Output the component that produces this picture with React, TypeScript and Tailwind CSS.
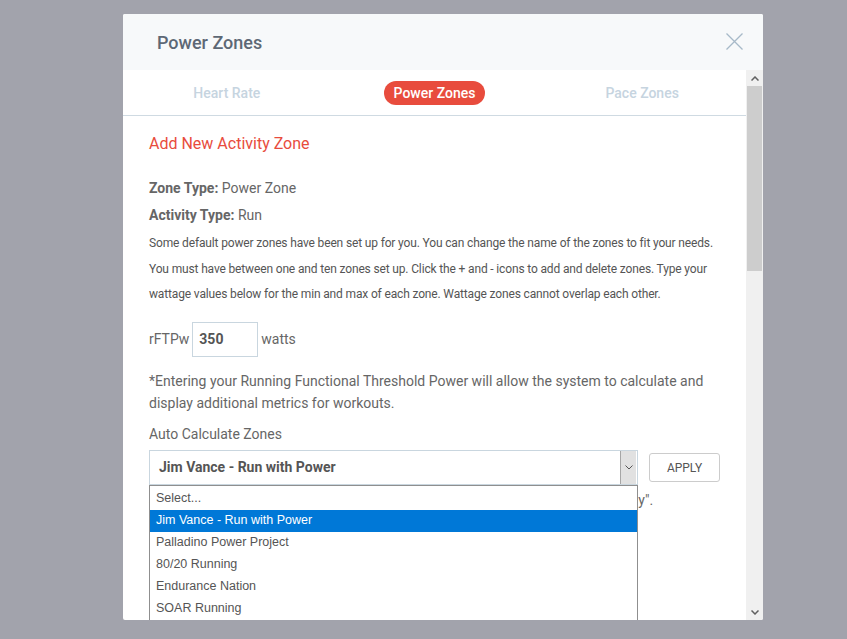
// Power Zones modal: tabs, rFTPw input and the auto-calculate select with its open list.

const OPTIONS = [
  "Select...",
  "Jim Vance - Run with Power",
  "Palladino Power Project",
  "80/20 Running",
  "Endurance Nation",
  "SOAR Running",
];

export default function App() {
  return (
    <div className="min-h-[639px] w-[847px] bg-[#a2a3ac] pl-[123px] pt-[14px] font-['Roboto',sans-serif]">
      <div className="flex h-[606px] w-[640px] flex-col overflow-hidden rounded-[2px] bg-white">
        {/* header */}
        <div className="flex h-[56px] shrink-0 items-center justify-between bg-[#f7f9fa] pl-[34px] pr-[20px]">
          <h1 className="text-[18px] font-medium text-[#5d6875]">Power Zones</h1>
          <svg width="17" height="17" viewBox="0 0 17 17" className="mt-[-1px]">
            <path d="M0.5 0.5 L16.5 16.5 M16.5 0.5 L0.5 16.5" stroke="#a7b9c8" strokeWidth="1.3" />
          </svg>
        </div>

        <div className="flex min-h-0 flex-1">
          <div className="relative min-w-0 flex-1 overflow-hidden">
            <Tabs />
            <div className="px-[26px] pt-[18px] text-[#666]">
              <h2 className="text-[16px] leading-[20px] text-[#e84c3d]">Add New Activity Zone</h2>

              <p className="mt-[24px] text-[14px] leading-[20px]">
                <span className="font-bold">Zone Type:</span> Power Zone
              </p>
              <p className="mt-[7px] text-[14px] leading-[20px]">
                <span className="font-bold">Activity Type:</span> Run
              </p>
              <p className="mt-[6px] text-[12px] leading-[25.5px] tracking-[-0.15px] text-[#555]">
                Some default power zones have been set up for you. You can change the name of the zones to fit your needs.
                You must have between one and ten zones set up. Click the + and - icons to add and delete zones. Type your
                wattage values below for the min and max of each zone. Wattage zones cannot overlap each other.
              </p>

              <div className="mt-[14px] flex items-center text-[14px]">
                <span>rFTPw</span>
                <div className="ml-[3px] flex h-[35px] w-[66px] items-center border border-[#c9d6df] pl-[6px] font-bold text-[#555]">
                  350
                </div>
                <span className="ml-[3px]">watts</span>
              </div>

              <p className="mt-[13px] text-[14px] leading-[22px]">
                *Entering your Running Functional Threshold Power will allow the system to calculate and display additional
                metrics for workouts.
              </p>

              <p className="mt-[10px] text-[14px] leading-[20px]">Auto Calculate Zones</p>

              <div className="relative mt-[6px]">
                <div className="flex items-center">
                  <div className="flex h-[35px] w-[489px] items-center border border-[#c9d6df] bg-white">
                    <span className="flex-1 pl-[9px] text-[14px] font-bold text-[#555]">Jim Vance - Run with Power</span>
                    <div className="mr-[1px] flex h-[33px] w-[16px] items-center justify-center border-l border-[#a6a6a6] bg-[#e1e1e1]">
                      <svg width="8" height="5" viewBox="0 0 8 5">
                        <path d="M0.5 0.5 L4 4 L7.5 0.5" stroke="#555" strokeWidth="1" fill="none" />
                      </svg>
                    </div>
                  </div>
                  <button
                    type="button"
                    className="ml-[11px] h-[29px] w-[71px] rounded-[3px] border border-[#ccc] bg-white pt-[1px] text-[12px] text-[#555]"
                  >
                    APPLY
                  </button>
                </div>

                <p className="mt-[5px] text-[14px] leading-[20px]">
                  Select a method above to calculate the zones from your rFTPw, then click "Apply".
                </p>

                <div className="mt-[100px] flex h-[30px] w-[489px]">
                  <div className="w-[64px] border border-[#c9d6df]" />
                  <div className="w-[13px] border border-l-0 border-[#c9d6df]" />
                  <div className="w-[63px] border border-l-0 border-[#c9d6df]" />
                </div>

                {/* open select list */}
                <ul className="absolute left-0 top-[35px] w-[489px] border border-[#8f8f8f] bg-white pt-[2px] font-['Liberation_Sans',sans-serif] text-[12.5px] text-[#555]">
                  {OPTIONS.map((o, i) => (
                    <li
                      key={o}
                      className={
                        i === 1
                          ? "flex h-[22px] items-center bg-[#0078d7] pl-[6px] text-white"
                          : "flex h-[22px] items-center pl-[6px]"
                      }
                    >
                      {o}
                    </li>
                  ))}
                </ul>
              </div>
            </div>
          </div>

          {/* scrollbar */}
          <div className="flex w-[17px] shrink-0 flex-col bg-[#f0f0f0]">
            <div className="flex h-[16px] items-center justify-center">
              <svg width="8" height="5" viewBox="0 0 8 5">
                <path d="M0.5 4.5 L4 1 L7.5 4.5" stroke="#606060" strokeWidth="1.5" fill="none" />
              </svg>
            </div>
            <div className="mx-[1px] h-[185px] bg-[#cdcdcd]" />
            <div className="flex-1" />
            <div className="flex h-[16px] items-center justify-center">
              <svg width="8" height="5" viewBox="0 0 8 5">
                <path d="M0.5 0.5 L4 4 L7.5 0.5" stroke="#606060" strokeWidth="1.5" fill="none" />
              </svg>
            </div>
          </div>
        </div>
      </div>
    </div>
  );
}

function Tabs() {
  return (
    <div className="grid h-[46px] grid-cols-3 items-center border-b border-[#cfdae2] pt-[1px] text-[14px] font-medium">
      <div className="text-center text-[#c6d4df]">Heart Rate</div>
      <div className="flex justify-center">
        <span className="rounded-full bg-[#e84c3d] px-[10px] py-[3px] leading-[18px] text-white">Power Zones</span>
      </div>
      <div className="text-center text-[#c6d4df]">Pace Zones</div>
    </div>
  );
}
